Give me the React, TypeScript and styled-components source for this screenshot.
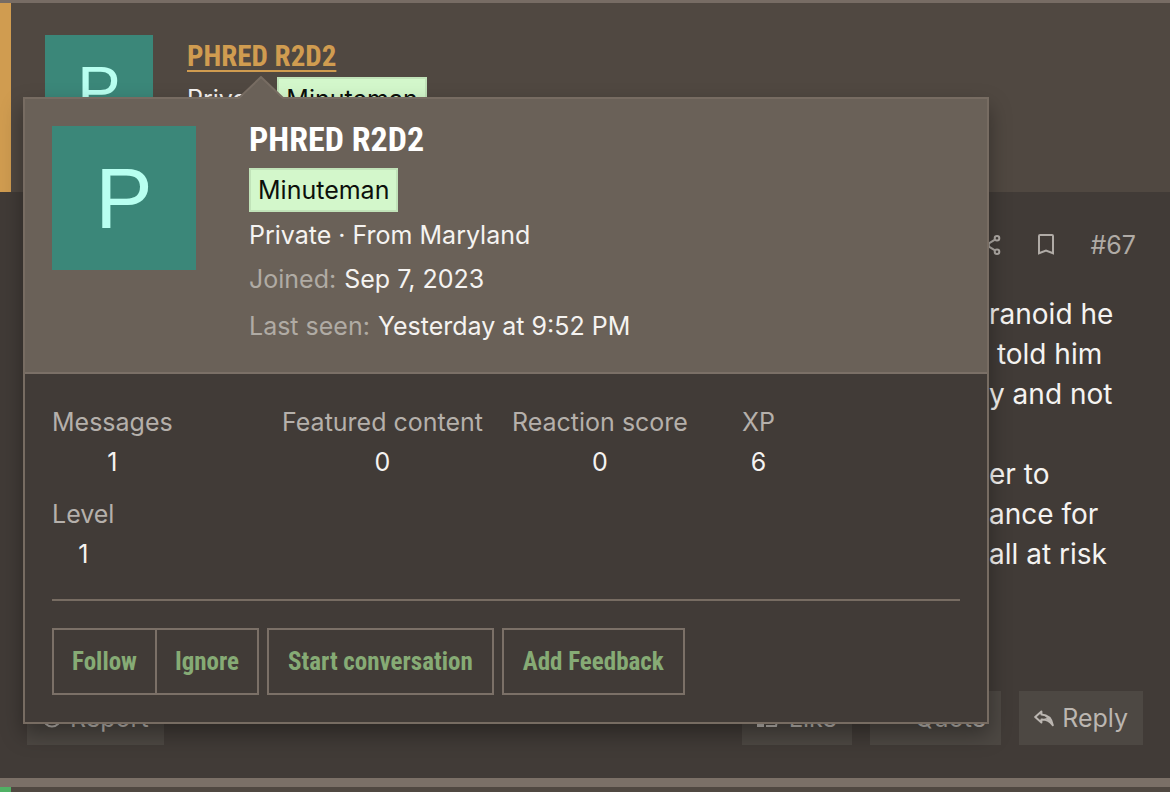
import React from "react";
import styled, { createGlobalStyle } from "styled-components";

const sans = `Inter, "Liberation Sans", sans-serif`;
const condensed = `"Roboto Condensed", "Liberation Sans Narrow", "DejaVu Sans Condensed", sans-serif`;

const Global = createGlobalStyle`
  *, *::before, *::after { box-sizing: border-box; }
  body {
    margin: 0;
    background: #504841;
    color: #f5f3f1;
    font-family: ${sans};
    font-size: 25px;
    line-height: 36px;
  }
  h4, p, dl, dt, dd { margin: 0; }
  button { font: inherit; cursor: pointer; }
`;

const Page = styled.main`
  position: relative;
  display: flex;
  flex-direction: column;
  min-height: 100vh;
  border-top: 3px solid #776c64;
`;

const PostHeader = styled.header`
  display: flex;
  align-items: flex-start;
  gap: 34px;
  min-height: 189px;
  padding: 32px 34px;
  border-left: 11px solid #d09c50;
  background: #504841;
`;

const NextPost = styled.div`
  flex: 1;
  border-left: 11px solid #50b064;
`;

const Avatar = styled.div<{ $size: number }>`
  flex: none;
  display: flex;
  align-items: center;
  justify-content: center;
  width: ${(p) => p.$size}px;
  height: ${(p) => p.$size}px;
  background: #3b8779;
  color: #b8fff0;
  font-family: "Liberation Sans", Arial, sans-serif;
  font-size: ${(p) => Math.round(p.$size * 0.6)}px;
  line-height: 1;
`;

const UserCell = styled.div`
  display: flex;
  flex-direction: column;
`;

const NameLink = styled.a`
  color: #d09c50;
  font: 700 29px/42px ${condensed};
  text-decoration: underline;
  text-decoration-thickness: 2px;
  text-underline-offset: 4px;
`;

const UserTitle = styled.div`
  display: flex;
  align-items: center;
  gap: 8px;
`;

const Banner = styled.em`
  display: inline-block;
  padding: 2px 7px;
  border: 2px solid #c1e3b9;
  background: #d3f7cb;
  color: #0c100b;
  font-style: normal;
`;

const PostBody = styled.div`
  padding: 35px 27px 33px;
  background: #413b37;
  border-bottom: 9px solid #7b7067;
`;

const PostMeta = styled.div`
  display: flex;
  justify-content: flex-end;
  align-items: center;
  gap: 36px;
  padding-right: 7px;
  color: #b0aba6;
`;

const MetaLink = styled.a`
  color: inherit;
  text-decoration: none;

  svg { display: block; }
`;

const Message = styled.p`
  width: 154px;
  margin: 31px 0 117px auto;
  font-size: 28px;
  line-height: 40px;
  white-space: pre;
`;

const PostFooter = styled.footer`
  display: flex;
  justify-content: space-between;
`;

const ActionSet = styled.div`
  display: flex;
  gap: 18px;
`;

const ActionButton = styled.button`
  display: flex;
  align-items: center;
  gap: 8px;
  height: 54px;
  padding: 0 15px;
  border: 0;
  background: #4d4843;
  color: #bbb6b1;
`;

const Tooltip = styled.section`
  position: absolute;
  top: 94px;
  left: 23px;
  width: min(966px, calc(100% - 46px));
  border: 2px solid #776c62;
  background: #413b37;
  box-shadow: 0 10px 20px rgba(0, 0, 0, 0.35);
`;

const Arrow = styled.svg`
  position: absolute;
  top: -23px;
  left: 213px;
`;

const CardHeader = styled.div`
  display: flex;
  align-items: flex-start;
  gap: 53px;
  padding: 27px 27px 28px;
  border-bottom: 2px solid #7b7067;
  background: #6a6158;
`;

const CardInfo = styled.div`
  display: flex;
  flex-direction: column;
  align-items: flex-start;
`;

const CardName = styled.h4`
  margin-top: -8px;
  font: 700 34px/42px ${condensed};
  color: #fff;
`;

const CardBanner = styled(Banner)`
  margin: 8px 0 5px;
`;

const Blurb = styled.div``;

const InfoPair = styled.dl`
  display: flex;
  gap: 8px;
  margin-top: 8px;

  & + & { margin-top: 11px; }
  dt { color: #b0aba4; }
`;

const CardBody = styled.div`
  padding: 30px 27px 27px;
`;

const Stats = styled.div`
  display: grid;
  grid-template-columns: repeat(4, 1fr);
  gap: 16px 12px;
  justify-items: start;
  padding-bottom: 27px;
  border-bottom: 2px solid #776c62;
`;

const Stat = styled.dl`
  text-align: center;

  dt { color: #b5b0ab; }
  dd { margin-top: 4px; }
`;

const CardActions = styled.div`
  display: flex;
  flex-wrap: wrap;
  gap: 8px;
  margin-top: 27px;
`;

const CardButton = styled.button`
  height: 67px;
  padding: 0 19px;
  border: 2px solid #7b7067;
  background: transparent;
  color: #86ab75;

  && { font: 700 25px/32px ${condensed}; }
`;

const ButtonGroup = styled.div`
  display: flex;

  ${CardButton} { padding: 0 18px; }
  ${CardButton} + ${CardButton} { border-left: 0; }
`;

const ShareIcon = () => (
  <svg width="18" height="20" viewBox="0 0 18 20" fill="none" stroke="currentColor" strokeWidth="2">
    <circle cx="14" cy="3.3" r="2.3" />
    <circle cx="3.5" cy="10" r="2.3" />
    <circle cx="14" cy="16.7" r="2.3" />
    <path d="M5.5 8.7L12 4.6M5.5 11.3L12 15.4" />
  </svg>
);

const BookmarkIcon = () => (
  <svg width="18" height="22" viewBox="0 0 18 22" fill="none" stroke="currentColor" strokeWidth="2">
    <path d="M2 19.3V2Q2 1 3 1H15Q16 1 16 2V19.3L9 16.5Z" />
  </svg>
);

const ReportIcon = () => (
  <svg width="20" height="20" viewBox="0 0 20 20" fill="none" stroke="currentColor" strokeWidth="2">
    <circle cx="10" cy="10" r="8.5" />
    <path d="M10 5v6M10 13v2" />
  </svg>
);

const LikeIcon = () => (
  <svg width="24" height="20" viewBox="0 0 24 20" fill="none" stroke="currentColor" strokeWidth="2">
    <path d="M1 9h5v9H1z" fill="currentColor" />
    <path d="M8 9l5-7c3 0 2 4 1 6h7l-2 10H9" />
  </svg>
);

const QuoteIcon = () => (
  <svg width="22" height="20" viewBox="0 0 22 20" fill="none" stroke="currentColor" strokeWidth="2">
    <path d="M11 2v13M5 8h12" />
  </svg>
);

const ReplyIcon = () => (
  <svg width="20" height="17" viewBox="0 0 20 17" fill="none" stroke="currentColor" strokeWidth="2" strokeLinejoin="round">
    <path d="M7.4 1.5L1.2 7L7.4 12.5V9.4C12.5 9.2 16 11 18.8 15.2C17.6 8.6 13.7 4.9 7.4 4.6Z" />
    <path d="M10 5.5C14 6.5 17 9.5 18.6 14.8C16 11 13.5 9.5 10 8.8L13 8Z" fill="currentColor" stroke="none" />
  </svg>
);

const stats = [
  ["Messages", "1"],
  ["Featured content", "0"],
  ["Reaction score", "0"],
  ["XP", "6"],
  ["Level", "1"],
];

const messageLines = ["ranoid he", " told him", "y and not", "", "er to", "ance for", "all at risk"];

export default function App() {
  return (
    <>
      <Global />
      <Page>
        <article>
          <PostHeader>
            <Avatar $size={108}>P</Avatar>
            <UserCell>
              <NameLink href="#user">PHRED R2D2</NameLink>
              <UserTitle>
                Private <Banner>Minuteman</Banner>
              </UserTitle>
            </UserCell>
          </PostHeader>
          <PostBody>
            <PostMeta>
              <MetaLink href="#share" aria-label="Share"><ShareIcon /></MetaLink>
              <MetaLink href="#bookmark" aria-label="Bookmark"><BookmarkIcon /></MetaLink>
              <MetaLink href="#post-67">#67</MetaLink>
            </PostMeta>
            <Message>{messageLines.join("\n")}</Message>
            <PostFooter>
              <ActionButton><ReportIcon />Report</ActionButton>
              <ActionSet>
                <ActionButton><LikeIcon />Like</ActionButton>
                <ActionButton><QuoteIcon />Quote</ActionButton>
                <ActionButton><ReplyIcon />Reply</ActionButton>
              </ActionSet>
            </PostFooter>
          </PostBody>
        </article>
        <NextPost />

        <Tooltip>
          <CardHeader>
            <Avatar $size={144}>P</Avatar>
            <CardInfo>
              <CardName>PHRED R2D2</CardName>
              <CardBanner>Minuteman</CardBanner>
              <Blurb>Private · From Maryland</Blurb>
              <InfoPair><dt>Joined:</dt><dd>Sep 7, 2023</dd></InfoPair>
              <InfoPair><dt>Last seen:</dt><dd>Yesterday at 9:52 PM</dd></InfoPair>
            </CardInfo>
          </CardHeader>
          <CardBody>
            <Stats>
              {stats.map(([label, value]) => (
                <Stat key={label}><dt>{label}</dt><dd>{value}</dd></Stat>
              ))}
            </Stats>
            <CardActions>
              <ButtonGroup>
                <CardButton>Follow</CardButton>
                <CardButton>Ignore</CardButton>
              </ButtonGroup>
              <CardButton>Start conversation</CardButton>
              <CardButton>Add Feedback</CardButton>
            </CardActions>
          </CardBody>
          <Arrow width="46" height="24" viewBox="0 0 46 24">
            <path d="M0 24L23 1L46 24Z" fill="#6a6158" />
            <path d="M1 22L23 1L45 22" fill="none" stroke="#776c62" strokeWidth="2" />
          </Arrow>
        </Tooltip>
      </Page>
    </>
  );
}
